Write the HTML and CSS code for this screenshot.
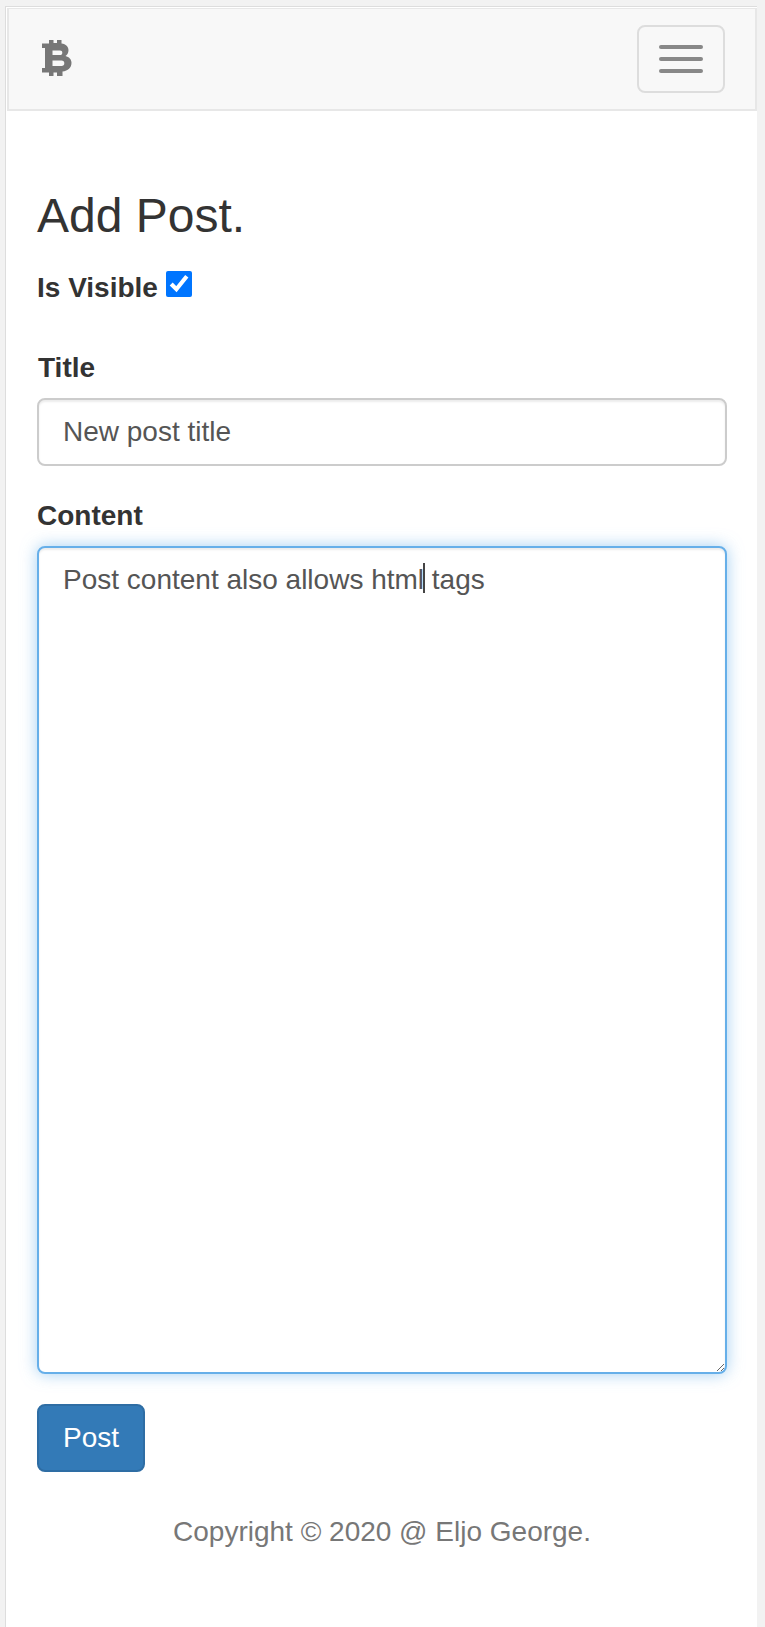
FILE: index.html
```html
<!DOCTYPE html>
<html lang="en">
  <head>
    <meta charset="UTF-8" />
    <meta name="viewport" content="width=device-width, initial-scale=1.0" />
    <title>Add Post</title>
    <link rel="stylesheet" href="styles.css">
  </head>
  <body>
    <div class="page">
      <nav class="navbar">
        <a class="brand" href="#" aria-label="Home">
          <svg width="30" height="36" viewBox="0 0 30 36">
            <path fill="#777" fill-rule="evenodd" d="M7 0h4.500v3h3.500V0h4.500v3.500c4.500.6 7 3 7 6.800 0 2.600-1.300 4.600-3 5.600 3.500.9 6 3.200 6 6.900 0 5-3.500 8.200-9 8.700V36H15v-3.500h-3.500V36H7v-3.500H0V28h3V8H0V3.500h7zM10.500 10.500V15H18c1.500 0 2.300-.9 2.300-2.300s-.8-2.200-2.300-2.200zM10.500 20.500V26h9c1.800 0 2.800-1.100 2.800-2.800s-1-2.700-2.800-2.700z" />
          </svg>
        </a>
        <button class="toggle" type="button" aria-label="Toggle navigation">
          <span class="bar"></span>
          <span class="bar"></span>
          <span class="bar"></span>
        </button>
      </nav>

      <main class="content">
        <h3>Add Post.</h3>
        <form>
          <div class="visible-row">
            <label for="visible">Is Visible</label>
            <input id="visible" type="checkbox" checked />
          </div>
          <div class="group group-title">
            <label for="title">Title</label>
            <input id="title" class="field" type="text" value="New post title" />
          </div>
          <div class="group">
            <label for="body">Content</label>
            <div class="area-wrap">
              <textarea id="body" class="field focused">Post content also allows html tags</textarea>
              <span class="caret"></span>
            </div>
          </div>
          <button class="btn" type="button">Post</button>
        </form>
        <footer class="copyright">Copyright © 2020 @ Eljo George.</footer>
      </main>
    </div>
  </body>
</html>
```

FILE: styles.css
```css
* {
  box-sizing: border-box;
}

html,
body {
  height: 100%;
}

body {
  margin: 0;
  padding-top: 6px;
  background-color: #f2f2f2;
  font-family: "Liberation Sans", Arial, sans-serif;
  font-size: 28px;
  line-height: 40px;
  color: #333;
}

.page {
  min-height: 100%;
  width: 752px;
  margin-left: 5px;
  padding-top: 1px;
  border-top: 1px solid #ddd;
  border-left: 1px solid #ddd;
  background-color: #fff;
}

.navbar {
  display: flex;
  align-items: center;
  justify-content: space-between;
  height: 103px;
  margin-left: 1px;
  padding: 0 30px 0 33px;
  border: 2px solid #e7e7e7;
  border-top-width: 1px;
  background-color: #f8f8f8;
}

.brand {
  display: flex;
  margin-top: -2px;
}

.toggle {
  display: flex;
  flex-direction: column;
  align-items: center;
  justify-content: center;
  gap: 8px;
  width: 88px;
  height: 68px;
  padding: 0;
  background: none;
  border: 2px solid #ddd;
  border-radius: 8px;
}

.bar {
  width: 44px;
  height: 4px;
  border-radius: 2px;
  background-color: #888;
}

.content {
  padding: 78px 30px 0 31px;
}

h3 {
  margin: 0 0 26px;
  font-size: 48px;
  font-weight: 500;
  line-height: 53px;
}

label {
  font-weight: 700;
}

.visible-row {
  display: flex;
  align-items: flex-start;
  gap: 8px;
  height: 40px;
}

.visible-row input {
  width: 26px;
  height: 26px;
  margin: 3px 0 0;
}

.group {
  margin-bottom: 0;
}

.group label {
  display: block;
  margin-bottom: 10px;
}

.group-title {
  margin-top: 40px;
  margin-bottom: 30px;
}

.group-title label {
  padding-left: 1px;
}

.field {
  display: block;
  width: 100%;
  height: 68px;
  padding: 12px 24px;
  font: inherit;
  color: #555;
  background-color: #fff;
  border: 2px solid #ccc;
  border-radius: 8px;
  box-shadow: inset 0 2px 2px rgba(0, 0, 0, 0.075);
  outline: none;
}

textarea.field {
  height: 828px;
  caret-color: transparent;
}

.focused {
  border-color: #66afe9;
  box-shadow: inset 0 2px 2px rgba(0, 0, 0, 0.075), 0 0 16px rgba(102, 175, 233, 0.6);
}

.area-wrap {
  position: relative;
}

.caret {
  position: absolute;
  top: 17px;
  left: 386px;
  width: 2px;
  height: 30px;
  background-color: #444;
}

.btn {
  display: block;
  height: 68px;
  margin-top: 30px;
  padding: 0 24px;
  font: inherit;
  color: #fff;
  background-color: #337ab7;
  border: 2px solid #2e6da4;
  border-radius: 8px;
}

.copyright {
  margin-top: 40px;
  text-align: center;
  color: #777;
}
```
